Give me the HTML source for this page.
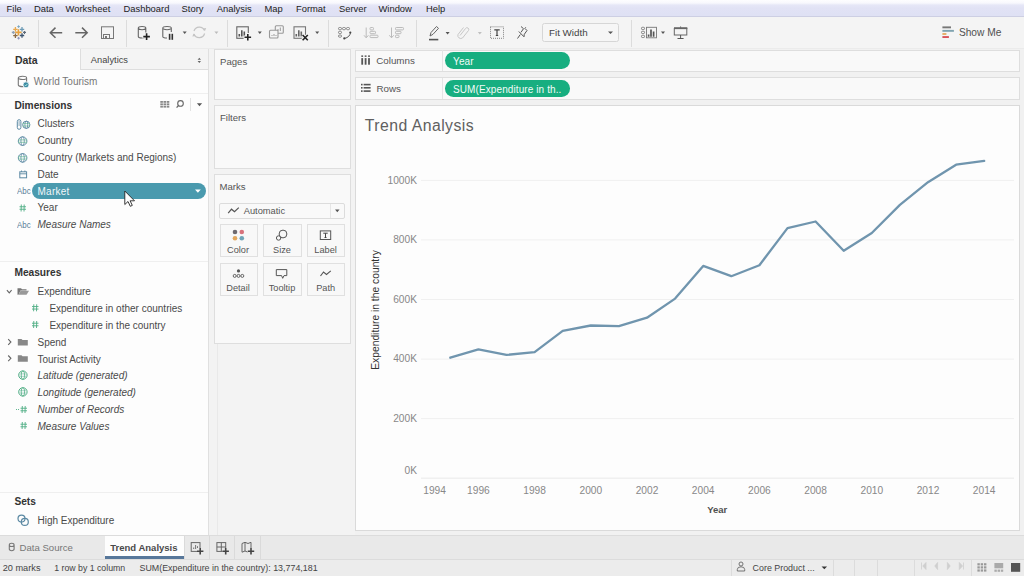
<!DOCTYPE html>
<html><head><meta charset="utf-8"><style>
html,body{margin:0;padding:0;width:1024px;height:576px;overflow:hidden;position:relative;font-family:"Liberation Sans", sans-serif;}
.t{position:absolute;white-space:pre;line-height:1;}
.r{position:absolute;overflow:visible;}
</style></head><body>
<div class="r" style="left:0px;top:0px;width:1024px;height:576px;background:#f1f1f1"></div>
<div class="r" style="left:0px;top:0px;width:1024px;height:17px;background:linear-gradient(#fdfdff 0px,#f8f8fd 3px,#e6e7f7 5px,#e1e2f5 8px,#dfe1f4 15px)"></div>
<div class="r" style="left:0px;top:16px;width:1024px;height:1px;background:#cdcfe3"></div>
<div class="t" style="left:6.6px;top:4.04px;font-size:9.4px;color:#222;font-weight:normal;font-style:normal;">File</div>
<div class="t" style="left:34px;top:4.04px;font-size:9.4px;color:#222;font-weight:normal;font-style:normal;">Data</div>
<div class="t" style="left:65.6px;top:4.04px;font-size:9.4px;color:#222;font-weight:normal;font-style:normal;">Worksheet</div>
<div class="t" style="left:123.5px;top:4.04px;font-size:9.4px;color:#222;font-weight:normal;font-style:normal;">Dashboard</div>
<div class="t" style="left:181.6px;top:4.04px;font-size:9.4px;color:#222;font-weight:normal;font-style:normal;">Story</div>
<div class="t" style="left:216.8px;top:4.04px;font-size:9.4px;color:#222;font-weight:normal;font-style:normal;">Analysis</div>
<div class="t" style="left:264.5px;top:4.04px;font-size:9.4px;color:#222;font-weight:normal;font-style:normal;">Map</div>
<div class="t" style="left:296px;top:4.04px;font-size:9.4px;color:#222;font-weight:normal;font-style:normal;">Format</div>
<div class="t" style="left:339px;top:4.04px;font-size:9.4px;color:#222;font-weight:normal;font-style:normal;">Server</div>
<div class="t" style="left:378.5px;top:4.04px;font-size:9.4px;color:#222;font-weight:normal;font-style:normal;">Window</div>
<div class="t" style="left:426px;top:4.04px;font-size:9.4px;color:#222;font-weight:normal;font-style:normal;">Help</div>
<div class="r" style="left:0px;top:17px;width:1024px;height:31px;background:#f4f4f4"></div>
<div class="r" style="left:0px;top:47.5px;width:1024px;height:1.5px;background:#ebebeb"></div>
<div class="r" style="left:38px;top:20px;width:1px;height:27px;background:#dcdcdc"></div>
<div class="r" style="left:126px;top:20px;width:1px;height:27px;background:#dcdcdc"></div>
<div class="r" style="left:227px;top:20px;width:1px;height:27px;background:#dcdcdc"></div>
<div class="r" style="left:327.5px;top:20px;width:1px;height:27px;background:#dcdcdc"></div>
<div class="r" style="left:416px;top:20px;width:1px;height:27px;background:#dcdcdc"></div>
<div class="r" style="left:630.5px;top:20px;width:1px;height:27px;background:#dcdcdc"></div>
<div class="r" style="left:0px;top:49px;width:208.5px;height:486px;background:#fdfdfd"></div>
<div class="r" style="left:208px;top:49px;width:1px;height:486px;background:#e0e0e0"></div>
<div class="r" style="left:80px;top:49px;width:128px;height:20.5px;background:#f4f4f4;border-left:1px solid #dedede;border-bottom:1px solid #dedede;box-sizing:border-box"></div>
<div class="t" style="left:14.9px;top:54.61px;font-size:10.5px;color:#333;font-weight:bold;font-style:normal;">Data</div>
<div class="t" style="left:90.8px;top:55.63px;font-size:9.3px;color:#444;font-weight:normal;font-style:normal;">Analytics</div>
<div class="r" style="left:0px;top:92.5px;width:208px;height:1px;background:#efefef"></div>
<div class="t" style="left:33.8px;top:77.03px;font-size:10px;color:#777;font-weight:normal;font-style:normal;">World Tourism</div>
<div class="t" style="left:14.4px;top:100.87px;font-size:10.2px;color:#333;font-weight:bold;font-style:normal;">Dimensions</div>
<div class="t" style="left:37.5px;top:119.33px;font-size:10px;color:#4a4a4a;font-weight:normal;font-style:normal;">Clusters</div>
<div class="t" style="left:37.5px;top:136.34px;font-size:10px;color:#4a4a4a;font-weight:normal;font-style:normal;">Country</div>
<div class="t" style="left:37.5px;top:153.14px;font-size:10px;color:#4a4a4a;font-weight:normal;font-style:normal;">Country (Markets and Regions)</div>
<div class="t" style="left:37.5px;top:169.84px;font-size:10px;color:#4a4a4a;font-weight:normal;font-style:normal;">Date</div>
<div class="t" style="left:37.5px;top:203.34px;font-size:10px;color:#4a4a4a;font-weight:normal;font-style:normal;">Year</div>
<div class="t" style="left:37.5px;top:219.84px;font-size:10px;color:#4a4a4a;font-weight:normal;font-style:italic;">Measure Names</div>
<div class="r" style="left:32.2px;top:182.9px;width:174px;height:16.1px;background:#4a9aae;border-radius:8px"></div>
<div class="t" style="left:37.5px;top:186.84px;font-size:10px;color:#f2f7f9;font-weight:normal;font-style:normal;letter-spacing:0.25px;">Market</div>
<div class="r" style="left:0px;top:261px;width:208px;height:1px;background:#efefef"></div>
<div class="t" style="left:14.4px;top:268.17px;font-size:10.2px;color:#333;font-weight:bold;font-style:normal;">Measures</div>
<div class="t" style="left:37.5px;top:286.94px;font-size:10px;color:#4a4a4a;font-weight:normal;font-style:normal;">Expenditure</div>
<div class="t" style="left:49.4px;top:304.14px;font-size:10px;color:#4a4a4a;font-weight:normal;font-style:normal;">Expenditure in other countries</div>
<div class="t" style="left:49.4px;top:320.84px;font-size:10px;color:#4a4a4a;font-weight:normal;font-style:normal;">Expenditure in the country</div>
<div class="t" style="left:37.5px;top:337.54px;font-size:10px;color:#4a4a4a;font-weight:normal;font-style:normal;">Spend</div>
<div class="t" style="left:37.5px;top:354.54px;font-size:10px;color:#4a4a4a;font-weight:normal;font-style:normal;">Tourist Activity</div>
<div class="t" style="left:37.5px;top:371.34px;font-size:10px;color:#4a4a4a;font-weight:normal;font-style:italic;">Latitude (generated)</div>
<div class="t" style="left:37.5px;top:388.14px;font-size:10px;color:#4a4a4a;font-weight:normal;font-style:italic;">Longitude (generated)</div>
<div class="t" style="left:37.5px;top:405.04px;font-size:10px;color:#4a4a4a;font-weight:normal;font-style:italic;">Number of Records</div>
<div class="t" style="left:37.5px;top:421.54px;font-size:10px;color:#4a4a4a;font-weight:normal;font-style:italic;">Measure Values</div>
<div class="r" style="left:0px;top:492px;width:208px;height:1px;background:#efefef"></div>
<div class="t" style="left:14.4px;top:497.37px;font-size:10.2px;color:#333;font-weight:bold;font-style:normal;">Sets</div>
<div class="t" style="left:37.5px;top:516.03px;font-size:10px;color:#4a4a4a;font-weight:normal;font-style:normal;">High Expenditure</div>
<div class="r" style="left:209px;top:49px;width:146px;height:486px;background:#f3f3f3"></div>
<div class="r" style="left:216.5px;top:344px;width:1px;height:191px;background:#e9e9e9"></div>
<div class="r" style="left:213.5px;top:49.4px;width:137px;height:51px;background:#f9f9f9;border:1px solid #dedede;box-sizing:border-box"></div>
<div class="t" style="left:220px;top:56.67px;font-size:9.6px;color:#555;font-weight:normal;font-style:normal;">Pages</div>
<div class="r" style="left:213.5px;top:105.3px;width:137px;height:64px;background:#f9f9f9;border:1px solid #dedede;box-sizing:border-box"></div>
<div class="t" style="left:220px;top:112.87px;font-size:9.6px;color:#555;font-weight:normal;font-style:normal;">Filters</div>
<div class="r" style="left:213.5px;top:174px;width:137px;height:170px;background:#f9f9f9;border:1px solid #dedede;box-sizing:border-box"></div>
<div class="t" style="left:219.5px;top:182.17px;font-size:9.6px;color:#555;font-weight:normal;font-style:normal;">Marks</div>
<div class="r" style="left:219.2px;top:202.6px;width:125.4px;height:16.1px;background:#f9f9f9;border:1px solid #dcdcdc;border-radius:2px;box-sizing:border-box"></div>
<div class="r" style="left:330px;top:203.5px;width:1px;height:14.5px;background:#e6e6e6"></div>
<div class="t" style="left:243.7px;top:206.63px;font-size:9.3px;color:#555;font-weight:normal;font-style:normal;">Automatic</div>
<div class="r" style="left:219.6px;top:224.4px;width:38px;height:33px;background:#f8f8f8;border:1px solid #e0e0e0;box-sizing:border-box"></div>
<div class="t" style="left:238px;top:246.21px;font-size:9.2px;color:#555;font-weight:normal;font-style:normal;transform:translateX(-50%) scaleX(1.0);">Color</div>
<div class="r" style="left:262.5px;top:224.4px;width:39px;height:33px;background:#f8f8f8;border:1px solid #e0e0e0;box-sizing:border-box"></div>
<div class="t" style="left:282px;top:246.21px;font-size:9.2px;color:#555;font-weight:normal;font-style:normal;transform:translateX(-50%) scaleX(1.0);">Size</div>
<div class="r" style="left:306.6px;top:224.4px;width:38px;height:33px;background:#f8f8f8;border:1px solid #e0e0e0;box-sizing:border-box"></div>
<div class="t" style="left:325.6px;top:246.21px;font-size:9.2px;color:#555;font-weight:normal;font-style:normal;transform:translateX(-50%) scaleX(1.0);">Label</div>
<div class="r" style="left:219.6px;top:262.6px;width:38px;height:33px;background:#f8f8f8;border:1px solid #e0e0e0;box-sizing:border-box"></div>
<div class="t" style="left:238px;top:284.41px;font-size:9.2px;color:#555;font-weight:normal;font-style:normal;transform:translateX(-50%) scaleX(1.0);">Detail</div>
<div class="r" style="left:262.5px;top:262.6px;width:39px;height:33px;background:#f8f8f8;border:1px solid #e0e0e0;box-sizing:border-box"></div>
<div class="t" style="left:282px;top:284.41px;font-size:9.2px;color:#555;font-weight:normal;font-style:normal;transform:translateX(-50%) scaleX(1.0);">Tooltip</div>
<div class="r" style="left:306.6px;top:262.6px;width:38px;height:33px;background:#f8f8f8;border:1px solid #e0e0e0;box-sizing:border-box"></div>
<div class="t" style="left:325.6px;top:284.41px;font-size:9.2px;color:#555;font-weight:normal;font-style:normal;transform:translateX(-50%) scaleX(1.0);">Path</div>
<svg class="r" style="left:209px;top:170px;" width="146" height="130" viewBox="209 170 146 130"><path d="M228.2 213.2L231.5 209.2L234.5 211.8L238.8 207.6" fill="none" stroke="#555" stroke-width="1.2"/><path d="M335.05 209.60000000000002H339.55L337.3 212.20000000000002Z" fill="#555"/><circle cx="235" cy="232" r="2.3" fill="#6e6a70"/><circle cx="241.8" cy="232" r="2.3" fill="#d8737c"/><circle cx="235" cy="238.3" r="2.3" fill="#e3a75e"/><circle cx="241.8" cy="238.3" r="2.3" fill="#6fa5b8"/><circle cx="283" cy="234" r="3.9" fill="#f8f8f8" stroke="#555" stroke-width="1"/><circle cx="278.6" cy="238" r="2.2" fill="#f8f8f8" stroke="#555" stroke-width="1"/><rect x="320.3" y="230.9" width="10.4" height="8.6" fill="none" stroke="#555" stroke-width="1"/><path d="M323.3 233.2H327.7M325.5 233.2V237.5M324.5 237.5H326.5" stroke="#444" stroke-width="1" fill="none"/><circle cx="238.5" cy="270.9" r="1.6" fill="#555"/><circle cx="234.7" cy="275.9" r="1.5" fill="none" stroke="#555" stroke-width="0.9"/><circle cx="238.5" cy="275.9" r="1.5" fill="none" stroke="#555" stroke-width="0.9"/><circle cx="242.3" cy="275.9" r="1.5" fill="none" stroke="#555" stroke-width="0.9"/><path d="M276.3 269.6H286.8V275.6H284L282.7 278.3L281.6 275.6H276.3Z" fill="none" stroke="#555" stroke-width="1"/><path d="M320.5 276L323.5 272L326.5 274.5L330.8 270.8" fill="none" stroke="#555" stroke-width="1.1"/></svg>
<div class="r" style="left:355.4px;top:49.5px;width:664.5px;height:22.5px;background:#f9f9f9;border:1px solid #dedede;box-sizing:border-box"></div>
<div class="r" style="left:442.1px;top:50px;width:1px;height:21px;background:#e4e4e4"></div>
<div class="t" style="left:376.2px;top:56.00px;font-size:9.8px;color:#555;font-weight:normal;font-style:normal;">Columns</div>
<div class="r" style="left:355.4px;top:77px;width:664.5px;height:23px;background:#f9f9f9;border:1px solid #dedede;box-sizing:border-box"></div>
<div class="r" style="left:442.1px;top:78px;width:1px;height:21px;background:#e4e4e4"></div>
<div class="t" style="left:376.5px;top:84.00px;font-size:9.8px;color:#555;font-weight:normal;font-style:normal;">Rows</div>
<svg class="r" style="left:355px;top:49px;" width="90" height="51" viewBox="355 49 90 51"><rect x="361.3" y="55.4" width="1.8" height="1.5" fill="#555"/><rect x="361.3" y="58.1" width="1.8" height="6.6" fill="#555"/><rect x="364.7" y="55.4" width="1.8" height="1.5" fill="#555"/><rect x="364.7" y="58.1" width="1.8" height="6.6" fill="#555"/><rect x="368.1" y="55.4" width="1.8" height="1.5" fill="#555"/><rect x="368.1" y="58.1" width="1.8" height="6.6" fill="#555"/><rect x="361" y="83.8" width="1.6" height="1.6" fill="#555"/><rect x="363.6" y="83.8" width="7" height="1.6" fill="#555"/><rect x="361" y="87.0" width="1.6" height="1.6" fill="#555"/><rect x="363.6" y="87.0" width="7" height="1.6" fill="#555"/><rect x="361" y="90.3" width="1.6" height="1.6" fill="#555"/><rect x="363.6" y="90.3" width="7" height="1.6" fill="#555"/></svg>
<div class="r" style="left:445px;top:51.8px;width:125px;height:16.8px;background:#17ae80;border-radius:8.4px"></div>
<div class="t" style="left:453px;top:56.53px;font-size:10px;color:#f4fbf8;font-weight:normal;font-style:normal;letter-spacing:0.15px;">Year</div>
<div class="r" style="left:445px;top:80px;width:125px;height:16.6px;background:#17ae80;border-radius:8.3px"></div>
<div class="t" style="left:453px;top:84.53px;font-size:10px;color:#f4fbf8;font-weight:normal;font-style:normal;letter-spacing:0.1px;">SUM(Expenditure in th..</div>
<div class="r" style="left:355.4px;top:105.3px;width:664.5px;height:425.5px;background:#fdfdfd;border:1px solid #dadada;box-sizing:border-box"></div>
<div class="t" style="left:364.8px;top:118.23px;font-size:15.8px;color:#606060;font-weight:normal;font-style:normal;letter-spacing:0.45px;">Trend Analysis</div>
<svg class="r" style="left:356px;top:106px;" width="662" height="423" viewBox="356 106 662 423"><line x1="421" y1="180.4" x2="1014" y2="180.4" stroke="#f0f0f0" stroke-width="1"/><line x1="421" y1="239.9" x2="1014" y2="239.9" stroke="#f0f0f0" stroke-width="1"/><line x1="421" y1="299.5" x2="1014" y2="299.5" stroke="#f0f0f0" stroke-width="1"/><line x1="421" y1="359.1" x2="1014" y2="359.1" stroke="#f0f0f0" stroke-width="1"/><line x1="421" y1="418.6" x2="1014" y2="418.6" stroke="#f0f0f0" stroke-width="1"/><line x1="421" y1="478.2" x2="1014" y2="478.2" stroke="#e9e9e9" stroke-width="1"/></svg>
<div class="t" style="right:607px;top:175.57px;font-size:10.2px;color:#888;font-weight:normal;font-style:normal;">1000K</div>
<div class="t" style="right:607px;top:235.07px;font-size:10.2px;color:#888;font-weight:normal;font-style:normal;">800K</div>
<div class="t" style="right:607px;top:294.67px;font-size:10.2px;color:#888;font-weight:normal;font-style:normal;">600K</div>
<div class="t" style="right:607px;top:354.27px;font-size:10.2px;color:#888;font-weight:normal;font-style:normal;">400K</div>
<div class="t" style="right:607px;top:413.77px;font-size:10.2px;color:#888;font-weight:normal;font-style:normal;">200K</div>
<div class="t" style="right:607px;top:466.47px;font-size:10.2px;color:#888;font-weight:normal;font-style:normal;">0K</div>
<div class="t" style="left:478.40000000000003px;top:486.27px;font-size:10.2px;color:#888;font-weight:normal;font-style:normal;transform:translateX(-50%) scaleX(1.0);">1996</div>
<div class="t" style="left:534.6px;top:486.27px;font-size:10.2px;color:#888;font-weight:normal;font-style:normal;transform:translateX(-50%) scaleX(1.0);">1998</div>
<div class="t" style="left:590.8px;top:486.27px;font-size:10.2px;color:#888;font-weight:normal;font-style:normal;transform:translateX(-50%) scaleX(1.0);">2000</div>
<div class="t" style="left:647.0px;top:486.27px;font-size:10.2px;color:#888;font-weight:normal;font-style:normal;transform:translateX(-50%) scaleX(1.0);">2002</div>
<div class="t" style="left:703.2px;top:486.27px;font-size:10.2px;color:#888;font-weight:normal;font-style:normal;transform:translateX(-50%) scaleX(1.0);">2004</div>
<div class="t" style="left:759.4000000000001px;top:486.27px;font-size:10.2px;color:#888;font-weight:normal;font-style:normal;transform:translateX(-50%) scaleX(1.0);">2006</div>
<div class="t" style="left:815.6px;top:486.27px;font-size:10.2px;color:#888;font-weight:normal;font-style:normal;transform:translateX(-50%) scaleX(1.0);">2008</div>
<div class="t" style="left:871.8px;top:486.27px;font-size:10.2px;color:#888;font-weight:normal;font-style:normal;transform:translateX(-50%) scaleX(1.0);">2010</div>
<div class="t" style="left:928.0px;top:486.27px;font-size:10.2px;color:#888;font-weight:normal;font-style:normal;transform:translateX(-50%) scaleX(1.0);">2012</div>
<div class="t" style="left:984.2px;top:486.27px;font-size:10.2px;color:#888;font-weight:normal;font-style:normal;transform:translateX(-50%) scaleX(1.0);">2014</div>
<div class="t" style="left:434.6px;top:486.27px;font-size:10.2px;color:#888;font-weight:normal;font-style:normal;transform:translateX(-50%) scaleX(1.0);">1994</div>
<div class="t" style="left:717.2px;top:505.46px;font-size:9.5px;color:#505050;font-weight:bold;font-style:normal;transform:translateX(-50%) scaleX(1.0);">Year</div>
<div class="t" style="left:376px;top:310px;font-size:10.3px;color:#333;font-weight:normal;transform:translate(-50%,-50%) rotate(-90deg);">Expenditure in the country</div>
<svg class="r" style="left:356px;top:106px;" width="662" height="423" viewBox="356 106 662 423"><polyline points="450.3,357.7 478.4,349.3 506.5,354.9 534.6,352.1 562.7,330.9 590.8,325.5 618.9,326.2 647.0,317.7 675.1,298.6 703.2,265.9 731.3,276.2 759.4,265.2 787.5,228.1 815.6,221.5 843.7,250.8 871.8,233.0 899.9,204.9 928.0,182.2 956.1,164.7 984.2,160.8" fill="none" stroke="#7095ae" stroke-width="2.3" stroke-linejoin="round" stroke-linecap="round"/></svg>
<div class="r" style="left:0px;top:535px;width:1024px;height:24px;background:#e9e9e9"></div>
<div class="r" style="left:0px;top:535px;width:1024px;height:1px;background:#dcdcdc"></div>
<div class="r" style="left:183.5px;top:536px;width:1px;height:23px;background:#dadada"></div>
<div class="r" style="left:209.3px;top:536px;width:1px;height:23px;background:#dadada"></div>
<div class="r" style="left:234.2px;top:536px;width:1px;height:23px;background:#dadada"></div>
<div class="r" style="left:260.4px;top:536px;width:1px;height:23px;background:#dadada"></div>
<div class="r" style="left:105px;top:535.5px;width:78.5px;height:23.5px;background:#fdfdfd"></div>
<div class="r" style="left:105px;top:556px;width:78.5px;height:3px;background:#57779a"></div>
<div class="t" style="left:19.5px;top:543.37px;font-size:9.6px;color:#777;font-weight:normal;font-style:normal;">Data Source</div>
<div class="t" style="left:110.3px;top:543.26px;font-size:9.5px;color:#4a4a4a;font-weight:bold;font-style:normal;">Trend Analysis</div>
<div class="r" style="left:0px;top:559px;width:1024px;height:17px;background:#ececec"></div>
<div class="r" style="left:0px;top:559px;width:1024px;height:1px;background:#dcdcdc"></div>
<div class="r" style="left:731.3px;top:560px;width:1px;height:16px;background:#dcdcdc"></div>
<div class="r" style="left:833.1px;top:560px;width:1px;height:16px;background:#dcdcdc"></div>
<div class="r" style="left:854.4px;top:560px;width:1px;height:16px;background:#dcdcdc"></div>
<div class="r" style="left:876.6px;top:560px;width:1px;height:16px;background:#dcdcdc"></div>
<div class="r" style="left:913.8px;top:560px;width:1px;height:16px;background:#dcdcdc"></div>
<div class="r" style="left:970.7px;top:560px;width:1px;height:16px;background:#dcdcdc"></div>
<div class="t" style="left:2.7px;top:563.51px;font-size:9.2px;color:#444;font-weight:normal;font-style:normal;">20 marks</div>
<div class="t" style="left:54.2px;top:563.89px;font-size:8.75px;color:#444;font-weight:normal;font-style:normal;">1 row by 1 column</div>
<div class="t" style="left:139.5px;top:563.77px;font-size:8.9px;color:#444;font-weight:normal;font-style:normal;">SUM(Expenditure in the country): 13,774,181</div>
<div class="t" style="left:752.6px;top:563.77px;font-size:8.9px;color:#444;font-weight:normal;font-style:normal;">Core Product ...</div>
<svg class="r" style="left:0px;top:17px;" width="1024" height="31" viewBox="0 17 1024 31"><path d="M15.2 32.4H21.599999999999998M18.4 29.2V35.6" stroke="#e8a23f" stroke-width="1.6"/><path d="M13.2 29.3H17.6M15.4 27.1V31.5" stroke="#e9a94e" stroke-width="1.3"/><path d="M19.8 29.3H24.2M22 27.1V31.5" stroke="#6c9bb6" stroke-width="1.3"/><path d="M17.3 26.6H19.900000000000002M18.6 25.3V27.900000000000002" stroke="#7aa6c0" stroke-width="1"/><path d="M23.0 32.4H26.0M24.5 30.9V33.9" stroke="#5f6b7a" stroke-width="1.1"/><path d="M11.8 32.4H14.8M13.3 30.9V33.9" stroke="#8d9fb5" stroke-width="1.1"/><path d="M13.2 35.7H17.6M15.4 33.5V37.900000000000006" stroke="#8a6a45" stroke-width="1.3"/><path d="M19.8 35.5H24.2M22 33.3V37.7" stroke="#3e5570" stroke-width="1.3"/><path d="M17.3 38.2H19.900000000000002M18.6 36.900000000000006V39.5" stroke="#8a90b8" stroke-width="1"/><path d="M62.2 32.7H50.5M55.5 27.6L50.3 32.7L55.5 37.8" stroke="#666" stroke-width="1.5" fill="none"/><path d="M75.3 32.7H87M82 27.6L87.2 32.7L82 37.8" stroke="#666" stroke-width="1.5" fill="none"/><rect x="101.5" y="26.8" width="12" height="11.7" fill="none" stroke="#777" stroke-width="1"/><rect x="103.5" y="34.5" width="6" height="4" fill="none" stroke="#777" stroke-width="1"/><rect x="105" y="36" width="2" height="2" fill="#777"/><path d="M138.3 28.1V36.4A3.75 1.6 0 0 0 145.8 36.4V28.1A3.75 1.6 0 0 0 138.3 28.1A3.75 1.6 0 0 0 145.8 28.1" fill="none" stroke="#666" stroke-width="1.1"/><path d="M142.4 36.6H150.79999999999998M146.6 32.4V40.800000000000004" stroke="#f4f4f4" stroke-width="3.6"/><path d="M143.29999999999998 36.6H149.9M146.6 33.300000000000004V39.9" stroke="#222" stroke-width="1.6"/><path d="M162.8 28.1V36.4A4.25 1.6 0 0 0 171.3 36.4V28.1A4.25 1.6 0 0 0 162.8 28.1A4.25 1.6 0 0 0 171.3 28.1" fill="none" stroke="#666" stroke-width="1.1"/><rect x="167" y="32" width="7" height="9" fill="#f4f4f4"/><rect x="168.8" y="33.8" width="1.6" height="6" fill="#333"/><rect x="171.5" y="33.8" width="1.6" height="6" fill="#333"/><path d="M182.7 31.500000000000004H186.7L184.7 34.1Z" fill="#555"/><path d="M194 31A5.6 5.6 0 0 1 204.5 30.5M204.6 33.5A5.6 5.6 0 0 1 194 34" fill="none" stroke="#c4c4c4" stroke-width="1.2"/><path d="M203 28.5L205 31L206.2 28Z M195.5 36L193.5 33.5L192.4 36.5Z" fill="#c4c4c4"/><path d="M214.4 31.500000000000004H218.4L216.4 34.1Z" fill="#bbb"/><rect x="236.8" y="26.8" width="11.5" height="11.5" fill="none" stroke="#666" stroke-width="1.1"/><path d="M239.3 36.5V34M241.8 36.5V30.2M244.3 36.5V31.5" stroke="#555" stroke-width="1.6"/><path d="M243.60000000000002 37.2H252.0M247.8 33.0V41.400000000000006" stroke="#f4f4f4" stroke-width="3.6"/><path d="M244.5 37.2H251.10000000000002M247.8 33.900000000000006V40.5" stroke="#222" stroke-width="1.6"/><path d="M257.8 31.400000000000002H261.8L259.8 34.0Z" fill="#555"/><rect x="275.3" y="25.7" width="8" height="7.5" rx="1" fill="#f4f4f4" stroke="#999" stroke-width="1.1"/><path d="M278 31V29M280.3 31V27.5" stroke="#999" stroke-width="1"/><rect x="269.5" y="30.2" width="8.5" height="7.8" rx="1" fill="#f4f4f4" stroke="#999" stroke-width="1.1"/><path d="M272 36V35M274 36V34M276 36V35" stroke="#999" stroke-width="1"/><rect x="294" y="26.8" width="11.5" height="11.5" fill="none" stroke="#777" stroke-width="1.1"/><path d="M296.3 36.5V34M298.8 36.5V30.2M301.3 36.5V31.5" stroke="#666" stroke-width="1.6"/><path d="M302.6 35L307.8 40.2M307.8 35L302.6 40.2" stroke="#f4f4f4" stroke-width="3.6"/><path d="M302.6 35L307.8 40.2M307.8 35L302.6 40.2" stroke="#222" stroke-width="1.6"/><path d="M315.2 31.400000000000002H319.2L317.2 34.0Z" fill="#555"/><g fill="none" stroke="#777" stroke-width="0.9"><rect x="338.5" y="27.5" width="3" height="2.2" rx="1"/><rect x="342.5" y="27.5" width="3" height="2.2" rx="1"/><rect x="346.5" y="27.5" width="3" height="2.2" rx="1"/><rect x="338.5" y="31.3" width="3" height="2.2" rx="1"/><rect x="338.5" y="35" width="3" height="2.2" rx="1"/></g><path d="M350.5 32.5Q350 37 344.5 38.5" fill="none" stroke="#555" stroke-width="1"/><circle cx="350.3" cy="32.5" r="1.1" fill="#444"/><circle cx="344.3" cy="38.4" r="1.1" fill="#444"/><g stroke="#bbb" fill="none" stroke-width="1"><path d="M366.2 27.5V37.5M364 35.3L366.2 37.8L368.4 35.3"/><rect x="370" y="27.5" width="3.5" height="2.4" rx="0.8"/><rect x="370" y="31.3" width="5.5" height="2.4" rx="0.8"/><rect x="370" y="35.2" width="8" height="2.4" rx="0.8"/><path d="M391.5 27.5V37.5M389.3 35.3L391.5 37.8L393.7 35.3"/><rect x="395.5" y="27.5" width="8" height="2.4" rx="0.8"/><rect x="395.5" y="31.3" width="5.5" height="2.4" rx="0.8"/><rect x="395.5" y="35.2" width="3.5" height="2.4" rx="0.8"/></g><path d="M430 36L431 32.5L436.5 26.5L438.5 28.3L433 34.3Z" fill="none" stroke="#666" stroke-width="1"/><rect x="429" y="38.8" width="9.3" height="1.6" fill="#555"/><path d="M445.6 32.0H449.6L447.6 34.6Z" fill="#555"/><path d="M460 35.5L465.5 28.5A1.8 1.8 0 0 1 468.5 30.5L462.5 38A3 3 0 0 1 458 34.5L463.5 27.5" fill="none" stroke="#c8c8c8" stroke-width="1"/><path d="M477.8 32.0H481.8L479.8 34.6Z" fill="#c0c0c0"/><rect x="490.5" y="26.8" width="13" height="11.5" fill="none" stroke="#777" stroke-width="0.9" stroke-dasharray="1 1"/><path d="M494.3 29.8H499.7M497 29.8V35.5M495.8 35.5H498.2" stroke="#444" stroke-width="1.2" fill="none"/><path d="M517.5 38.5L520.3 34.5M518.8 31.5L524 36.8L524.3 34.3L527 30.5L524.8 28.3L525.8 27.3M521 32.3L523.5 28.7L521 26.5" fill="none" stroke="#555" stroke-width="1"/><g fill="none" stroke="#777" stroke-width="0.9"><rect x="641.5" y="27.3" width="3" height="2.2" rx="0.8"/><rect x="641.5" y="31.3" width="3" height="2.2" rx="0.8"/><rect x="641.5" y="35.3" width="3" height="2.2" rx="0.8"/><rect x="646.5" y="27.3" width="10" height="10.5"/></g><path d="M648.6 36.8V34.5M651 36.8V29.5M653.6 36.8V31.5" stroke="#555" stroke-width="1.7"/><path d="M661.0 31.500000000000004H665.0L663 34.1Z" fill="#555"/><rect x="674" y="27.3" width="13.3" height="1.8" fill="#555"/><rect x="674.3" y="28.5" width="12.5" height="6.5" fill="none" stroke="#666" stroke-width="1"/><path d="M680.6 35V38.5M677.5 38.5H683.6M680.6 26.5V27.5" stroke="#555" stroke-width="1"/><rect x="942.4" y="26.4" width="8.6" height="1.9" fill="#777"/><rect x="942.4" y="29.9" width="11.5" height="1.9" fill="#7fa3b0"/><rect x="942.4" y="33.2" width="4" height="1.6" fill="#e3a04b"/><rect x="942.4" y="36.1" width="6.5" height="1.9" fill="#d9535a"/></svg>
<div class="r" style="left:542px;top:23px;width:76.5px;height:18.6px;background:#f6f6f6;border:1px solid #d6d6d6;border-radius:2.5px;box-sizing:border-box"></div>
<div class="t" style="left:549px;top:28.10px;font-size:9.8px;color:#444;font-weight:normal;font-style:normal;">Fit Width</div>
<svg class="r" style="left:600px;top:17px;" width="20" height="31" viewBox="600 17 20 31"><path d="M608.0 31.400000000000002H613.0L610.5 34.0Z" fill="#555"/></svg>
<div class="t" style="left:958.9px;top:27.77px;font-size:10.2px;color:#505050;font-weight:normal;font-style:normal;">Show Me</div>
<svg class="r" style="left:0px;top:49px;" width="208" height="486" viewBox="0 49 208 486"><path d="M18.3 77.89999999999999V85.0A4.15 1.6 0 0 0 26.6 85.0V77.89999999999999A4.15 1.6 0 0 0 18.3 77.89999999999999A4.15 1.6 0 0 0 26.6 77.89999999999999" fill="none" stroke="#777" stroke-width="1.1"/><circle cx="26" cy="84.8" r="3" fill="#3c8ba3" stroke="#fdfdfd" stroke-width="0.8"/><path d="M24.6 84.8L25.7 85.9L27.5 83.8" stroke="#cfe" stroke-width="0.8" fill="none"/><path d="M197.6 59.8H201L199.3 57.8Z M197.6 61H201L199.3 63Z" fill="#666"/><rect x="160.3" y="101.0" width="2.6" height="1.8" fill="#888"/><rect x="160.3" y="103.4" width="2.6" height="1.8" fill="#888"/><rect x="160.3" y="105.8" width="2.6" height="1.8" fill="#888"/><rect x="163.5" y="101.0" width="2.6" height="1.8" fill="#888"/><rect x="163.5" y="103.4" width="2.6" height="1.8" fill="#888"/><rect x="163.5" y="105.8" width="2.6" height="1.8" fill="#888"/><rect x="166.70000000000002" y="101.0" width="2.6" height="1.8" fill="#888"/><rect x="166.70000000000002" y="103.4" width="2.6" height="1.8" fill="#888"/><rect x="166.70000000000002" y="105.8" width="2.6" height="1.8" fill="#888"/><circle cx="180.5" cy="103.4" r="2.8" fill="none" stroke="#666" stroke-width="1.1"/><path d="M178.6 105.4L176.6 107.6" stroke="#666" stroke-width="1.3"/><rect x="190" y="98" width="1" height="13" fill="#e2e2e2"/><path d="M196.9 103.2H202.1L199.5 106.2Z" fill="#555"/><path d="M17.3 121.5A1.8 1.8 0 0 1 20.9 121.5V127.5A1.8 1.8 0 0 1 17.3 127.5Z" fill="none" stroke="#5b89a3" stroke-width="1"/><path d="M19.1 121V126" stroke="#5b89a3" stroke-width="0.7"/><circle cx="26.3" cy="124.8" r="3.6" fill="none" stroke="#5b89a3" stroke-width="1"/><path d="M22.7 123.6H29.900000000000002M22.7 126.0H29.900000000000002" stroke="#7c9" stroke-width="0.8"/><ellipse cx="26.3" cy="124.8" rx="1.4400000000000002" ry="3.6" fill="none" stroke="#5b89a3" stroke-width="0.8"/><circle cx="22.6" cy="141.1" r="4.3" fill="none" stroke="#5b89a3" stroke-width="1"/><path d="M18.3 139.9H26.900000000000002M18.3 142.29999999999998H26.900000000000002" stroke="#7c9" stroke-width="0.8"/><ellipse cx="22.6" cy="141.1" rx="1.72" ry="4.3" fill="none" stroke="#5b89a3" stroke-width="0.8"/><circle cx="22.6" cy="157.9" r="4.3" fill="none" stroke="#5b89a3" stroke-width="1"/><path d="M18.3 156.70000000000002H26.900000000000002M18.3 159.1H26.900000000000002" stroke="#7c9" stroke-width="0.8"/><ellipse cx="22.6" cy="157.9" rx="1.72" ry="4.3" fill="none" stroke="#5b89a3" stroke-width="0.8"/><rect x="19.8" y="171.8" width="6.8" height="6" fill="none" stroke="#5b89a3" stroke-width="1"/><path d="M19.8 173.8H26.6M21.5 170.5V172M24.9 170.5V172" stroke="#5b89a3" stroke-width="0.9"/><path d="M21.3 204.5L21.1 211.5M24.2 204.5L24.0 211.5M19.5 206.74H26.0M19.5 209.26H26.0" stroke="#4fae84" stroke-width="0.9" fill="none"/><path d="M6.9 290.2L9.25 292.9L11.6 290.2" fill="none" stroke="#666" stroke-width="1.1"/><path d="M17.5 288.2H21L22 289.2H26.5V290.5H20.5L18.5 294.8H17.5Z" fill="#777"/><path d="M20.5 290.8H29L26.5 294.8H18.5Z" fill="#999"/><path d="M33.8 304.3L33.6 311.3M36.7 304.3L36.5 311.3M32 306.54H38.5M32 309.06H38.5" stroke="#4fae84" stroke-width="0.9" fill="none"/><path d="M33.8 321L33.6 328M36.7 321L36.5 328M32 323.24H38.5M32 325.76H38.5" stroke="#4fae84" stroke-width="0.9" fill="none"/><path d="M8.2 339.2L10.9 342L8.2 344.8" fill="none" stroke="#666" stroke-width="1.1"/><path d="M17.8 339H21.5L22.5 340H27.8V345.5H17.8Z" fill="#888"/><path d="M8.2 355.5L10.9 358.3L8.2 361.1" fill="none" stroke="#666" stroke-width="1.1"/><path d="M17.8 355.2H21.5L22.5 356.2H27.8V361.7H17.8Z" fill="#888"/><circle cx="22.9" cy="375.1" r="4.2" fill="none" stroke="#4fae84" stroke-width="1"/><path d="M18.7 373.90000000000003H27.099999999999998M18.7 376.3H27.099999999999998" stroke="#9cb" stroke-width="0.8"/><ellipse cx="22.9" cy="375.1" rx="1.6800000000000002" ry="4.2" fill="none" stroke="#4fae84" stroke-width="0.8"/><circle cx="22.9" cy="391.9" r="4.2" fill="none" stroke="#4fae84" stroke-width="1"/><path d="M18.7 390.7H27.099999999999998M18.7 393.09999999999997H27.099999999999998" stroke="#9cb" stroke-width="0.8"/><ellipse cx="22.9" cy="391.9" rx="1.6800000000000002" ry="4.2" fill="none" stroke="#4fae84" stroke-width="0.8"/><path d="M22.3 406L22.1 413M25.2 406L25.0 413M20.5 408.24H27.0M20.5 410.76H27.0" stroke="#4fae84" stroke-width="0.9" fill="none"/><path d="M16 409.5H19" stroke="#4fae84" stroke-width="0.9" stroke-dasharray="1 1"/><path d="M22.3 422L22.1 429M25.2 422L25.0 429M20.5 424.24H27.0M20.5 426.76H27.0" stroke="#4fae84" stroke-width="0.9" fill="none"/><circle cx="21.5" cy="518.6" r="3.5" fill="none" stroke="#5b89a3" stroke-width="1.2"/><circle cx="24.8" cy="521.9" r="3.5" fill="none" stroke="#5b89a3" stroke-width="1.2"/><path d="M195 189.5H200.8L197.9 192.7Z" fill="#fff"/></svg>
<div class="t" style="left:16.6px;top:187.12px;font-size:8.6px;color:#5a8099;font-weight:normal;font-style:normal;transform:scaleX(0.92);transform-origin:0 0;">Abc</div>
<div class="t" style="left:16.6px;top:220.52px;font-size:8.6px;color:#5a8099;font-weight:normal;font-style:normal;transform:scaleX(0.92);transform-origin:0 0;">Abc</div>
<svg class="r" style="left:120px;top:186px" width="20" height="24" viewBox="120 186 20 24"><path d="M124.8 191V204.5L128 201.5L130.3 206.3L132.3 205.4L130.1 200.8H134.5Z" fill="#fff" stroke="#222" stroke-width="0.9" stroke-linejoin="round"/></svg>
<svg class="r" style="left:0px;top:535px;" width="1024" height="41" viewBox="0 535 1024 41"><path d="M9.3 544.9V549.0999999999999A2.4 1.6 0 0 0 14.100000000000001 549.0999999999999V544.9A2.4 1.6 0 0 0 9.3 544.9A2.4 1.6 0 0 0 14.100000000000001 544.9" fill="none" stroke="#777" stroke-width="1.1"/><rect x="191.2" y="542.6" width="8.8" height="8.8" fill="none" stroke="#666" stroke-width="1"/><path d="M193.7 549V547.5M195.6 549V545M197.5 549V546.2" stroke="#666" stroke-width="0.9"/><rect x="197" y="548" width="7" height="7" fill="#e9e9e9"/><path d="M197.0 551.3H203.39999999999998M200.2 548.0999999999999V554.5" stroke="#444" stroke-width="1.6"/><rect x="216.9" y="542.6" width="8.8" height="8.8" fill="none" stroke="#666" stroke-width="1"/><path d="M216.9 547H225.7M221.3 542.6V551.4" stroke="#666" stroke-width="1"/><rect x="222.5" y="548" width="7" height="7" fill="#e9e9e9"/><path d="M222.5 551.3H228.89999999999998M225.7 548.0999999999999V554.5" stroke="#444" stroke-width="1.6"/><path d="M242 543.5L245 542.3L248 543.5L251 542.3V551L248 552.2L245 551L242 552.2Z M245 542.3V551" fill="none" stroke="#666" stroke-width="1"/><rect x="247.5" y="548" width="7" height="7" fill="#e9e9e9"/><path d="M247.8 551.3H254.2M251 548.0999999999999V554.5" stroke="#444" stroke-width="1.6"/><circle cx="741" cy="564" r="2" fill="none" stroke="#666" stroke-width="0.9"/><path d="M737.3 571V569.5Q737.3 566.8 741 566.8Q744.7 566.8 744.7 569.5V571Z" fill="none" stroke="#666" stroke-width="0.9"/><path d="M821.55 566.5999999999999H827.05L824.3 569.1999999999999Z" fill="#333"/><path d="M921.5 562.5V569.5M926 562.5L922.8 566L926 569.5Z M937.6 562.5L934.8 566L937.6 569.5Z M947.4 562.5L950.2 566L947.4 569.5Z M959.3 562.5L962.5 566L959.3 569.5Z M963.5 562.5V569.5" stroke="#cfcfcf" fill="#cfcfcf" stroke-width="0.8"/><rect x="977.4" y="563.2" width="2.4" height="2.2" fill="#999"/><rect x="977.4" y="566.3000000000001" width="2.4" height="2.2" fill="#999"/><rect x="977.4" y="569.4000000000001" width="2.4" height="2.2" fill="#999"/><rect x="980.6999999999999" y="563.2" width="2.4" height="2.2" fill="#999"/><rect x="980.6999999999999" y="566.3000000000001" width="2.4" height="2.2" fill="#999"/><rect x="980.6999999999999" y="569.4000000000001" width="2.4" height="2.2" fill="#999"/><rect x="984.0" y="563.2" width="2.4" height="2.2" fill="#999"/><rect x="984.0" y="566.3000000000001" width="2.4" height="2.2" fill="#999"/><rect x="984.0" y="569.4000000000001" width="2.4" height="2.2" fill="#999"/><rect x="994.4" y="563" width="8.8" height="5.3" fill="#aaa"/><rect x="994.4" y="569.6" width="2.4" height="2.2" fill="#aaa"/><rect x="997.6" y="569.6" width="2.4" height="2.2" fill="#aaa"/><rect x="1000.8" y="569.6" width="2.4" height="2.2" fill="#aaa"/><rect x="1011" y="563" width="9.2" height="8.8" fill="#555"/></svg>
</body></html>
